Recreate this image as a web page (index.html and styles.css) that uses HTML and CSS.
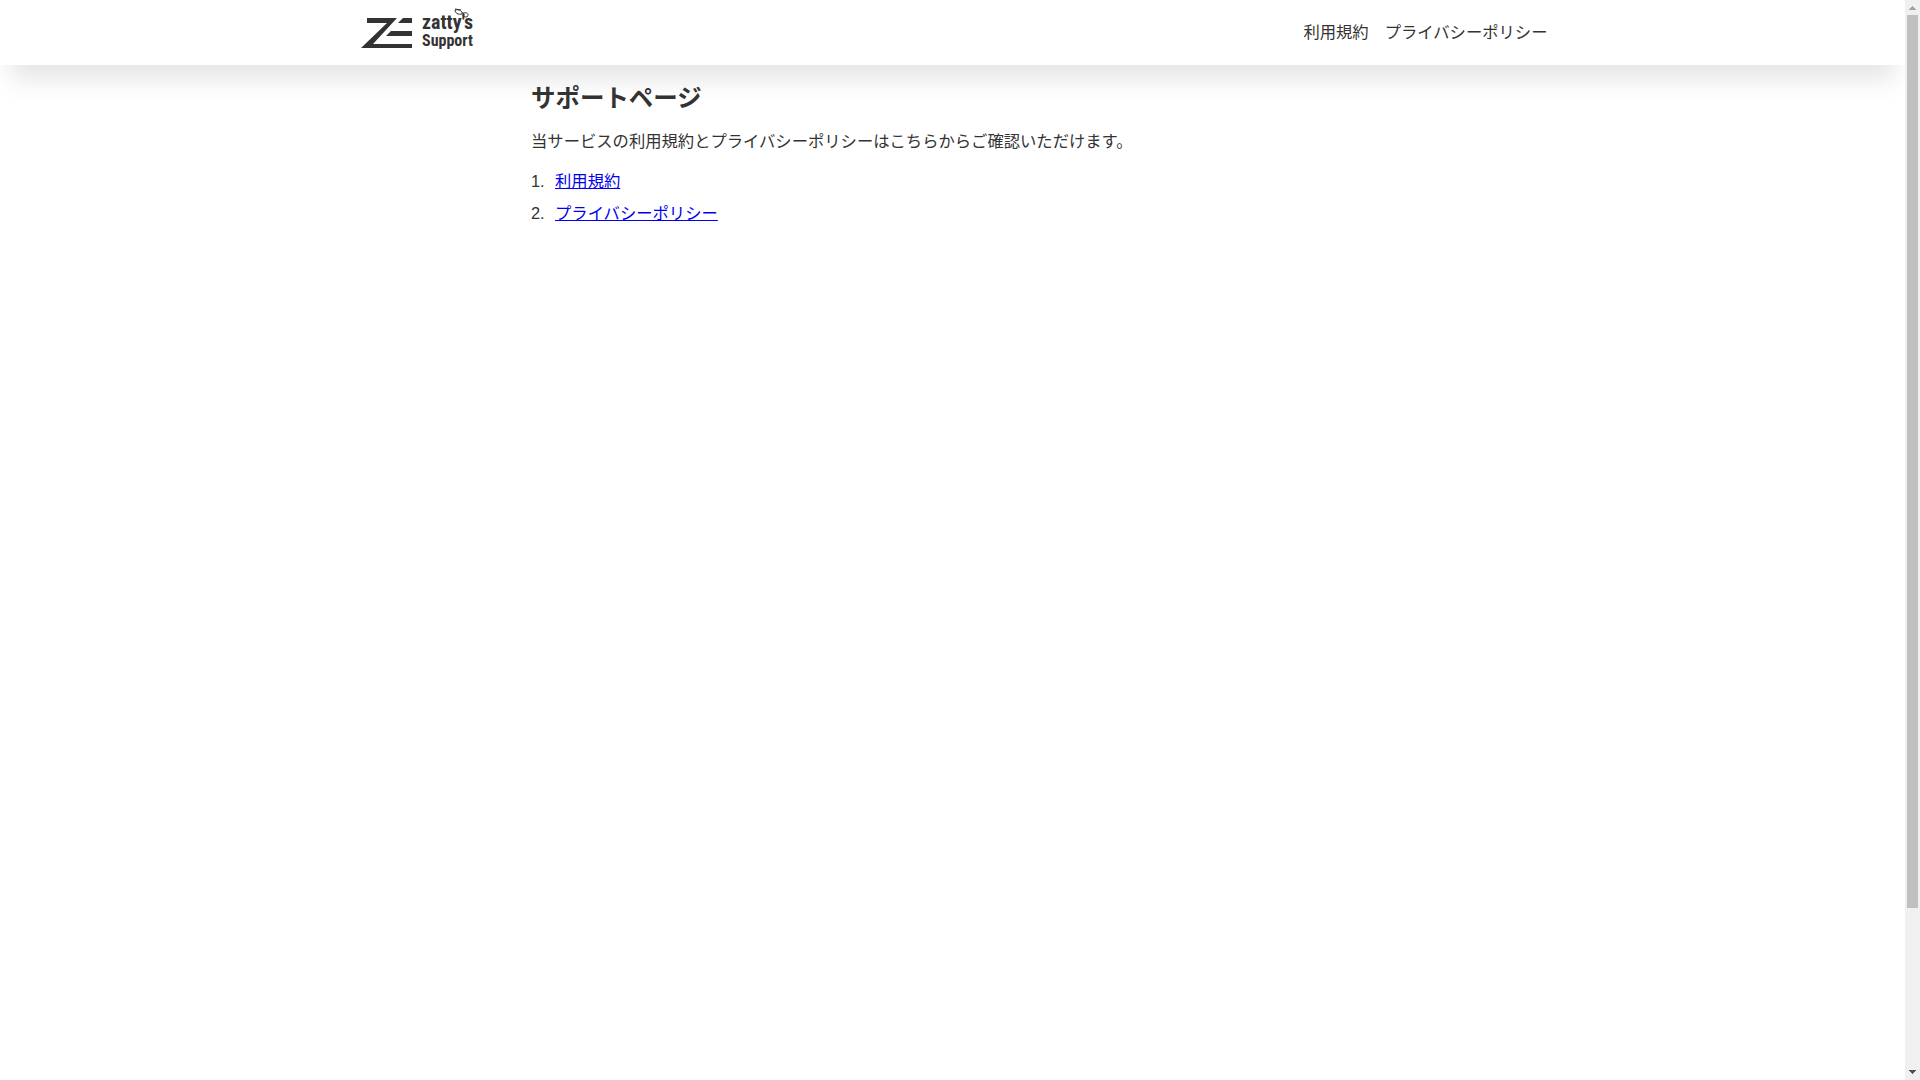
FILE: index.html
```
<!DOCTYPE html>
<html lang="ja">
<head>
    <meta charset="utf-8">
    <meta name="viewport" content="width=device-width, initial-scale=1">
    <title>zatty's Support</title>
    <link rel="stylesheet" href="styles.css">
</head>
<body>
    <header class="header">
        <div class="header-inner">
            <a class="logo" href="#" aria-label="zatty's Support">
                <svg width="116" height="44" viewBox="0 0 116 44">
                    <path d="M7 10H37L13 36H52V40H1L27 15H7Z"/>
                    <path d="M43 10H52V15H38Z"/>
                    <path d="M31 23H52V28H26Z"/>
                    <text class="logo-name" x="62" y="21">zatty's</text>
                    <text class="logo-sub" x="62" y="38">Support</text>
                    <g class="logo-glasses">
                        <path d="M95 2C99 1 103 3 102 6C98 7 95 5 95 2Z"/>
                        <path d="M102 5L104 5C108 4 109 7 107 9C103 9 102 7 104 5"/>
                        <path d="M95 1L101 2"/>
                    </g>
                </svg>
            </a>
            <nav class="nav">
                <a href="#">利用規約</a>
                <a href="#">プライバシーポリシー</a>
            </nav>
        </div>
    </header>

    <main class="main">
        <h1>サポートページ</h1>
        <p>当サービスの利用規約とプライバシーポリシーはこちらからご確認いただけます。</p>
        <ol class="link-list">
            <li><a href="#">利用規約</a></li>
            <li><a href="#">プライバシーポリシー</a></li>
        </ol>
    </main>

    <div class="scrollbar" aria-hidden="true">
        <svg class="arrow arrow-up" width="7" height="4" viewBox="0 0 7 4"><path d="M3 0H4V1H5V2H6V3H7V4H0V3H1V2H2V1H3Z"/></svg>
        <div class="track"><div class="thumb"></div></div>
        <svg class="arrow" width="7" height="4" viewBox="0 0 7 4"><path d="M0 0H7V1H6V2H5V3H4V4H3V3H2V2H1V1H0Z"/></svg>
    </div>
</body>
</html>
```

FILE: styles.css
```
* {
    box-sizing: border-box;
}

html {
    font-size: 102%;
}

body {
    margin: 0;
    padding-right: 15px;
    font-family: "Liberation Sans", "Noto Sans CJK JP", sans-serif;
    line-height: 24px;
    color: #333;
    background: #fff;
}

.header {
    height: 4rem;
    background: #fff;
    box-shadow: 0 25px 25px -10px rgba(0, 0, 0, 0.1);
}

.header-inner {
    display: flex;
    align-items: center;
    justify-content: space-between;
    max-width: 1190px;
    height: 100%;
    margin: 0 auto;
    padding: 0 0 2px 2px;
}

.logo {
    display: flex;
    margin-bottom: 4px;
}

.logo svg {
    fill: #333;
}

.logo-name,
.logo-sub {
    font-family: "Liberation Sans Narrow", "Roboto Condensed", "Open Sans Condensed", "Liberation Sans", sans-serif;
    font-weight: bold;
}

.logo-name {
    font-size: 20px;
}

.logo-sub {
    font-size: 16px;
}

.logo-glasses {
    fill: none;
    stroke: #333;
    stroke-width: 1;
}

.nav {
    display: flex;
    gap: 16px;
}

.nav a {
    color: inherit;
    text-decoration: none;
}

.main {
    max-width: 843px;
    margin: 0 auto;
    padding-top: 16px;
}

h1 {
    margin: 0;
    font-size: 1.5rem;
    line-height: 36px;
}

p {
    margin: 12px 0 16px;
}

.link-list {
    margin: 0;
    padding: 0;
    list-style: none;
    counter-reset: item;
}

.link-list li {
    display: flex;
    margin-bottom: 8px;
    counter-increment: item;
}

.link-list li::before {
    content: counter(item) ".";
    width: 24px;
}

.link-list a {
    color: #0000ee;
}

.scrollbar {
    position: fixed;
    top: 0;
    right: 0;
    display: flex;
    flex-direction: column;
    align-items: center;
    width: 15px;
    height: 100vh;
    padding: 6px 0;
    background: #f0f0f0;
}

.track {
    flex: 1;
    width: 11px;
    margin: 5px 0;
}

.thumb {
    height: 85%;
    background: #c0c0c0;
}

.arrow {
    fill: #505050;
}

.arrow-up {
    fill: #a3a3a3;
}
```
